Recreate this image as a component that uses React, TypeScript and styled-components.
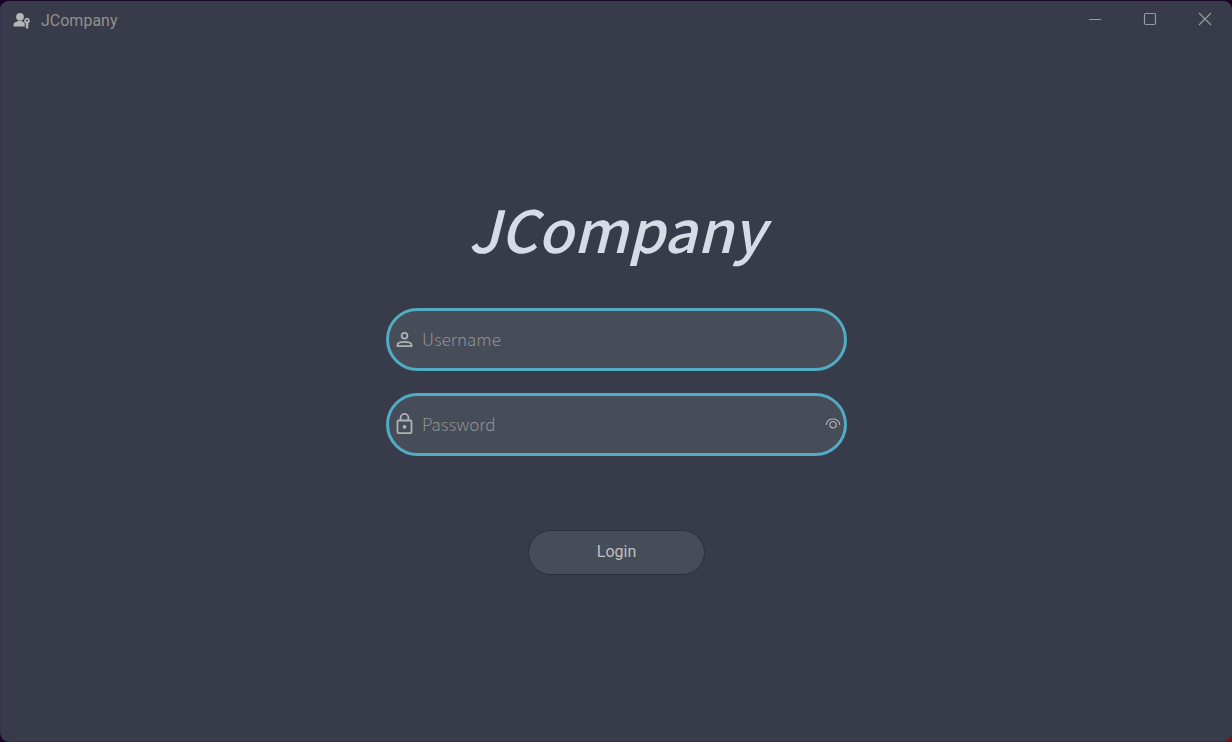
import React, { useState } from "react";
import styled, { createGlobalStyle } from "styled-components";

const GlobalStyle = createGlobalStyle`
  *, *::before, *::after { box-sizing: border-box; }
  body {
    margin: 0;
    background: linear-gradient(to bottom right, #170029 0%, #1b0020 60%, #8a0710 100%);
    font-family: Roboto, sans-serif;
  }
`;

const Window = styled.div`
  display: flex;
  flex-direction: column;
  min-height: 100vh;
  border: 1px solid #3b2f4e;
  border-top-color: #1c0a2c;
  border-right: 0;
  border-radius: 9px;
  background: #383b49;
`;

const TitleBar = styled.header`
  display: flex;
  align-items: center;
  justify-content: space-between;
  height: 38px;
  padding-left: 12px;
`;

const AppLabel = styled.div`
  display: flex;
  align-items: center;
  gap: 10px;
  padding-top: 2px;
  font-size: 16px;
  line-height: 20px;
  color: #91928f;
`;

const WindowControls = styled.div`
  display: flex;
  align-self: stretch;
  padding-bottom: 2px;
`;

const ControlButton = styled.button`
  display: flex;
  align-items: center;
  justify-content: center;
  width: 55px;
  padding: 0;
  border: 0;
  background: transparent;
  color: #9a9b9c;
`;

const Main = styled.main`
  flex: 1;
  display: flex;
  flex-direction: column;
  align-items: center;
  justify-content: center;
  padding-bottom: 18px;
`;

const Heading = styled.h1`
  margin: 0 0 40px;
  font-family: "Noto Sans CJK KR", "Noto Sans", sans-serif;
  font-size: 58px;
  font-weight: 500;
  font-style: italic;
  line-height: 80px;
  color: #d5dce6;
`;

const LoginForm = styled.form`
  display: flex;
  flex-direction: column;
  align-items: center;
  gap: 22px;
  width: 100%;
  max-width: 461px;
`;

const Field = styled.label`
  display: flex;
  align-items: center;
  gap: 9px;
  width: 100%;
  height: 63px;
  padding: 0 3px 0 7px;
  border: 3px solid #51acc4;
  border-radius: 32px;
  background: #474c59;
  color: #b0b2b4;
`;

const TextInput = styled.input`
  flex: 1;
  min-width: 0;
  padding: 0;
  border: 0;
  outline: 0;
  background: transparent;
  font-family: "Noto Sans CJK KR", "Noto Sans", sans-serif;
  font-size: 17px;
  font-weight: 300;
  line-height: 24px;
  color: #d5dce6;

  &::placeholder {
    color: #929292;
    opacity: 1;
  }
`;

const RevealButton = styled.button`
  display: flex;
  padding: 0;
  border: 0;
  background: transparent;
  color: #b0b2b4;
`;

const LoginButton = styled.button`
  width: 177px;
  height: 45px;
  margin-top: 52px;
  border: 1px solid #2c2e3b;
  border-radius: 23px;
  background: #474c59;
  font-family: Roboto, sans-serif;
  font-size: 16px;
  line-height: 20px;
  color: #bfc0c0;
`;

const UserKeyIcon = () => (
  <svg width="18" height="18" viewBox="0 0 18 18" fill="#b5b6b8" aria-hidden="true">
    <circle cx="7" cy="4.800" r="3.900" />
    <path d="M0.500 14.400V13c0-2.300 3-3.900 6.500-3.900 1.500 0 2.700.3 3.500.8.2.6.8 1.300 1.300 1.700v2.800z" />
    <path fillRule="evenodd" d="M14 5.800a3 3 0 0 0-1.200 5.700v4.200l1.200 1.300 1.800-1.800-1-1.100 1-1.100-.7-1.500A3 3 0 0 0 14 5.800zm0 1.700a1 1 0 1 1 0 2 1 1 0 0 1 0-2z" />
  </svg>
);

const PersonIcon = () => (
  <svg width="17" height="17" viewBox="0 0 17 17" fill="none" stroke="currentColor" strokeWidth="1.800" aria-hidden="true">
    <circle cx="8.500" cy="4.700" r="2.900" />
    <path d="M1.500 15.100v-1.300c0-1.900 3.500-3 7-3s7 1.100 7 3v1.300z" />
  </svg>
);

const LockIcon = () => (
  <svg width="17" height="22" viewBox="0 0 17 22" fill="none" stroke="currentColor" strokeWidth="1.800" aria-hidden="true">
    <rect x="1.500" y="7.500" width="14" height="12.600" rx="1" />
    <path d="M4.600 7.500V4.800a3.900 3.900 0 0 1 7.800 0v2.700" />
    <circle cx="8.500" cy="13.800" r="1.900" fill="currentColor" stroke="none" />
  </svg>
);

const EyeIcon = () => (
  <svg width="16" height="12" viewBox="0 0 16 12" fill="none" stroke="currentColor" strokeWidth="1.200" aria-hidden="true">
    <path d="M1.200 6.500C2 3 4.700 1 8 1s6 2 6.800 5.500" strokeLinecap="round" />
    <circle cx="8" cy="6.700" r="3.200" />
  </svg>
);

const MinimizeIcon = () => (
  <svg width="14" height="14" viewBox="0 0 14 14" fill="none" stroke="currentColor" aria-hidden="true">
    <path d="M1 7.500h12" />
  </svg>
);

const MaximizeIcon = () => (
  <svg width="14" height="14" viewBox="0 0 14 14" fill="none" stroke="currentColor" strokeWidth="1.200" aria-hidden="true">
    <rect x="1.500" y="1.500" width="11" height="11" rx="1.500" />
  </svg>
);

const CloseIcon = () => (
  <svg width="14" height="14" viewBox="0 0 14 14" fill="none" stroke="currentColor" strokeWidth="1.200" aria-hidden="true">
    <path d="M1 1l12 12M13 1L1 13" />
  </svg>
);

export default function App() {
  const [revealed, setRevealed] = useState(false);

  return (
    <>
      <GlobalStyle />
      <Window>
        <TitleBar>
          <AppLabel>
            <UserKeyIcon />
            <span>JCompany</span>
          </AppLabel>
          <WindowControls>
            <ControlButton type="button" aria-label="Minimize"><MinimizeIcon /></ControlButton>
            <ControlButton type="button" aria-label="Maximize"><MaximizeIcon /></ControlButton>
            <ControlButton type="button" aria-label="Close"><CloseIcon /></ControlButton>
          </WindowControls>
        </TitleBar>
        <Main>
          <Heading>JCompany</Heading>
          <LoginForm onSubmit={(event: React.FormEvent) => event.preventDefault()}>
            <Field>
              <PersonIcon />
              <TextInput type="text" placeholder="Username" aria-label="Username" autoComplete="username" />
            </Field>
            <Field>
              <LockIcon />
              <TextInput
                type={revealed ? "text" : "password"}
                placeholder="Password"
                aria-label="Password"
                autoComplete="current-password"
              />
              <RevealButton type="button" aria-label="Show password" onClick={() => setRevealed(!revealed)}>
                <EyeIcon />
              </RevealButton>
            </Field>
            <LoginButton type="submit">Login</LoginButton>
          </LoginForm>
        </Main>
      </Window>
    </>
  );
}
